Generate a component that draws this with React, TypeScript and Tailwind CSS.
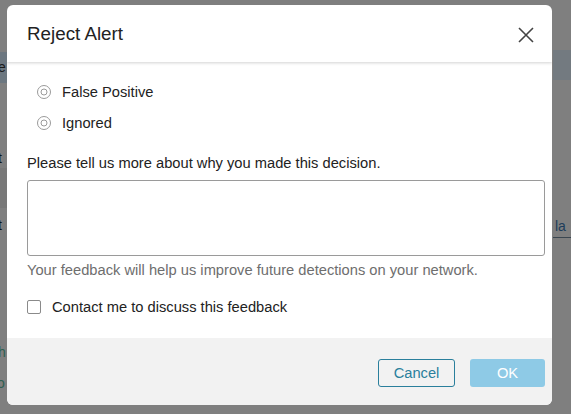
import React from "react";

function Radio() {
  return (
    <svg width="16" height="16" viewBox="0 0 16 16" className="shrink-0">
      <circle cx="8" cy="8" r="6.5" fill="white" stroke="#9a9a9a" strokeWidth="1" />
      <circle cx="8" cy="8" r="3" fill="none" stroke="#9a9a9a" strokeWidth="1" />
    </svg>
  );
}

export default function App() {
  return (
    <div
      className="relative w-[571px] h-[414px] overflow-hidden bg-[#7f7f7f]"
      style={{ fontFamily: '"Liberation Sans", Arial, sans-serif' }}
    >
      {/* background page fragments */}
      <div className="absolute left-0 top-[52px] w-[7px] h-[31px] bg-[#6c7780] text-[14px] text-[#1a1a1a] leading-[31px] overflow-hidden">
        <span className="ml-[-2px]">e</span>
      </div>
      <div className="absolute left-0 top-[148px] w-[7px] h-[20px] text-[14px] text-[#111] leading-[20px] overflow-hidden">
        <span className="ml-[-2px]">t</span>
      </div>
      <div className="absolute left-0 top-[215px] w-[7px] h-[20px] text-[14px] text-[#111] leading-[20px] overflow-hidden">
        <span className="ml-[-2px]">t</span>
      </div>
      <div className="absolute left-0 top-[168px] w-[7px] h-[40px] bg-[#787878]" />
      <div className="absolute left-0 top-[342px] w-[7px] h-[20px] text-[14px] text-[#2e5f52] leading-[20px] overflow-hidden">
        <span className="ml-[-2px]">h</span>
      </div>
      <div className="absolute left-0 top-[373px] w-[7px] h-[20px] text-[14px] text-[#2e5f52] leading-[20px] overflow-hidden">
        <span className="ml-[-3px]">o</span>
      </div>
      <div className="absolute left-[553px] top-[50px] w-[18px] h-[30px] bg-[#737a80]" />
      <div className="absolute left-[553px] top-[216px] w-[18px] h-[20px] text-[14px] text-[#1d3d5a] leading-[20px] overflow-hidden whitespace-nowrap">
        <span className="ml-[2px]">la</span>
      </div>
      <div className="absolute left-[553px] top-[237px] w-[18px] h-[1px] bg-[#3a4650]" />

      {/* modal */}
      <div className="absolute left-[7px] top-[5px] w-[545px] h-[400px] bg-white rounded-[6px] overflow-hidden flex flex-col">
        <div className="h-[57px] shrink-0 flex items-center justify-between pl-[20px] pr-[18px] pt-[2px] shadow-[0_1px_3px_rgba(0,0,0,0.18)] relative z-10">
          <span className="text-[18.8px] text-[#222]">Reject Alert</span>
          <svg width="16" height="16" viewBox="0 0 16 16">
            <path d="M1 1 L15 15 M15 1 L1 15" stroke="#444" strokeWidth="1.6" fill="none" />
          </svg>
        </div>
        <div className="flex-1 pl-[20px] pr-[7px] pt-[22px] text-[14.7px] text-[#222]">
          <div className="flex flex-col gap-[15px] pl-[9px]">
            <div className="flex items-center gap-[10px] h-[16px]">
              <Radio />
              <span>False Positive</span>
            </div>
            <div className="flex items-center gap-[10px] h-[16px]">
              <Radio />
              <span>Ignored</span>
            </div>
          </div>
          <div className="mt-[24px] leading-[16px]">Please tell us more about why you made this decision.</div>
          <div className="mt-[9px] h-[76px] border border-[#9a9a9a] rounded-[3px]" />
          <div className="mt-[6px] leading-[16px] text-[#6e6e6e]">Your feedback will help us improve future detections on your network.</div>
          <div className="mt-[21px] flex items-center gap-[11px] h-[16px]">
            <div className="w-[14px] h-[14px] border border-[#8a8a8a] rounded-[2px] bg-white" />
            <span className="leading-[16px]">Contact me to discuss this feedback</span>
          </div>
        </div>
        <div className="h-[67px] shrink-0 bg-[#f2f2f2] flex items-center justify-end gap-[15px] pr-[7px] pt-[3px]">
          <button className="w-[77px] h-[28px] border border-[#2a7f9c] rounded-[3px] text-[14.7px] text-[#2a7f9c] bg-transparent">
            Cancel
          </button>
          <button className="w-[75px] h-[28px] rounded-[3px] text-[14.7px] text-white bg-[#8ecae6]">
            OK
          </button>
        </div>
      </div>
    </div>
  );
}
